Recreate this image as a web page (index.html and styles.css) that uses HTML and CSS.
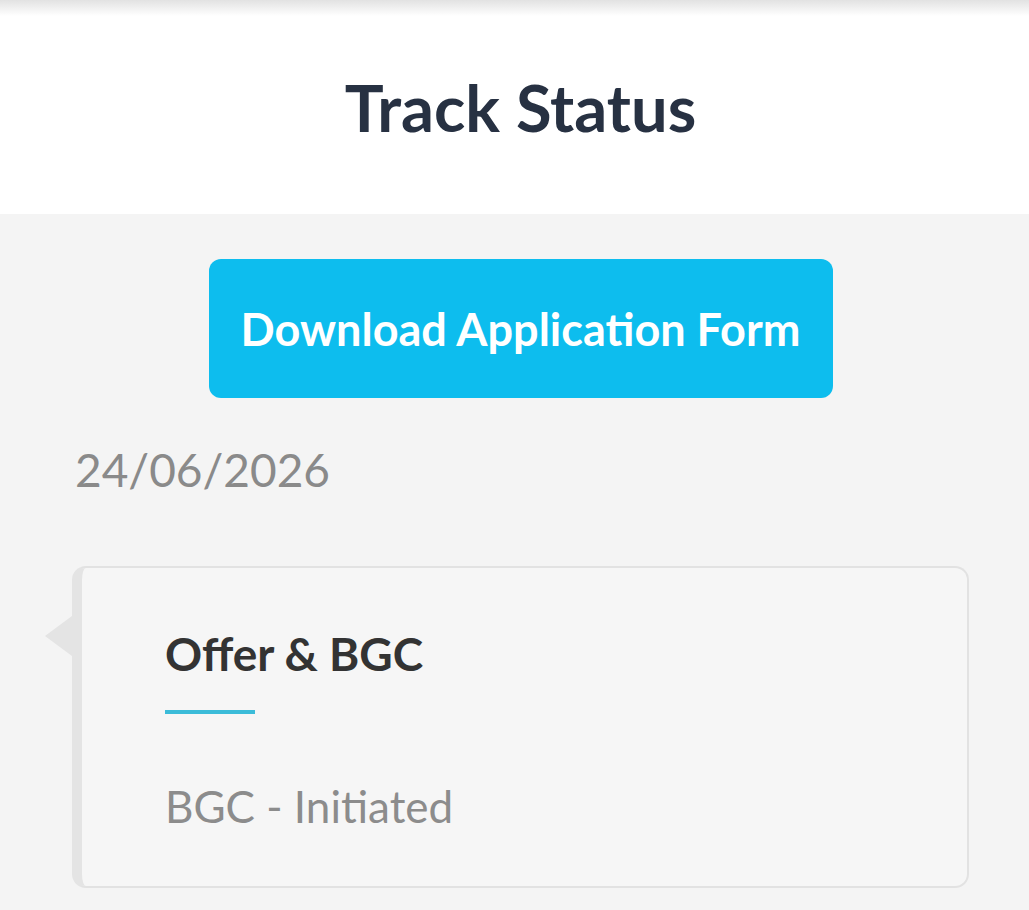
FILE: index.html
```html
<!DOCTYPE html>
<html lang="en">
<head>
  <meta charset="UTF-8" />
  <meta name="viewport" content="width=device-width, initial-scale=1.0" />
  <title>Track Status</title>
  <link rel="stylesheet" href="styles.css">
</head>
<body>
  <header class="topbar">
    <h1>Track Status</h1>
  </header>
  <main class="content">
    <div class="actions">
      <button class="btn-download">Download Application Form</button>
    </div>
    <div class="date">24/06/2026</div>
    <div class="timeline-card">
      <h2>Offer &amp; BGC</h2>
      <div class="underline"></div>
      <p class="status">BGC - Initiated</p>
    </div>
  </main>
</body>
</html>
```

FILE: styles.css
```css
body {
  font-family: Lato, "Open Sans", sans-serif;
  background: #f4f4f4;
  margin: 0;
  padding: 0;
  height: 910px;
  overflow: hidden;
}
.topbar {
  background: #fff;
  height: 214px;
  display: flex;
  align-items: center;
  justify-content: center;
  position: relative;
}
.topbar::before {
  content: "";
  position: absolute;
  top: 0;
  left: 0;
  right: 0;
  height: 16px;
  background: linear-gradient(#e2e2e2, rgba(255,255,255,0));
}
.topbar h1 {
  margin: 0 0 0 12px;
  font-size: 65px;
  font-weight: 700;
  color: #273142;
}
.content {
  padding: 45px 60px 0 72px;
}
.actions {
  display: flex;
  justify-content: center;
  margin-left: -60px;
  margin-right: -60px;
}
.btn-download {
  width: 624px;
  height: 139px;
  background: #0dbdee;
  color: #fff;
  border: none;
  border-radius: 12px;
  font-family: inherit;
  font-size: 45px;
  font-weight: 700;
}
.date {
  margin: 46px 0 0 3px;
  font-size: 46px;
  color: #8a8a8a;
  line-height: 52px;
}
.timeline-card {
  position: relative;
  margin-top: 70px;
  width: 897px;
  height: 322px;
  box-sizing: border-box;
  background: #f6f6f6;
  border: 2px solid #e2e2e2;
  border-left: 10px solid #e4e4e4;
  border-radius: 14px;
  padding: 58px 0 0 83px;
}
.timeline-card::before {
  content: "";
  position: absolute;
  left: -37px;
  top: 48px;
  border-top: 20px solid transparent;
  border-bottom: 20px solid transparent;
  border-right: 27px solid #e4e4e4;
}
.timeline-card h2 {
  margin: 0;
  font-size: 46px;
  font-weight: 700;
  color: #333;
  line-height: 56px;
}
.underline {
  width: 90px;
  height: 4px;
  background: #3cbcd9;
  margin-top: 28px;
}
.status {
  margin: 66px 0 0;
  font-size: 44px;
  color: #8c8c8c;
  line-height: 52px;
}
```
